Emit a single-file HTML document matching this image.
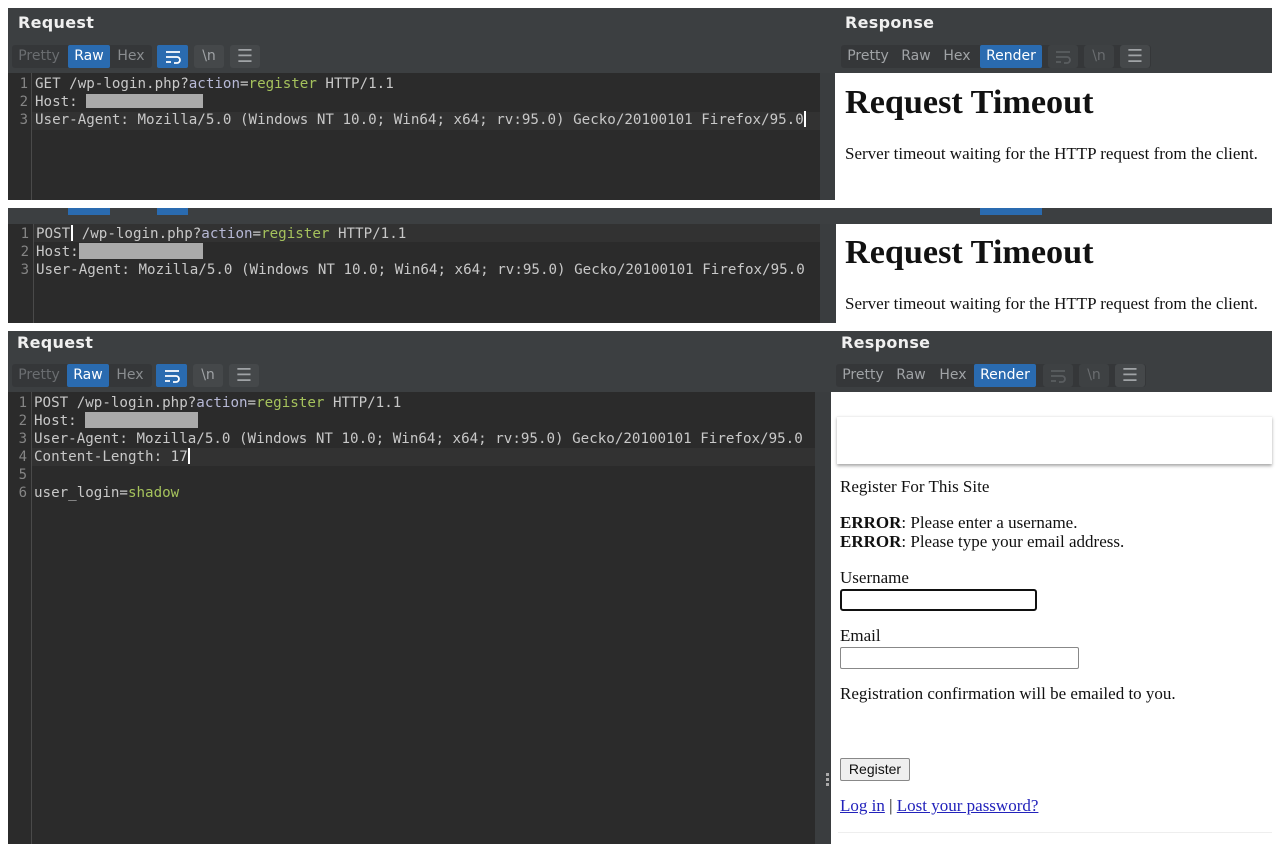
<!DOCTYPE html>
<html><head><meta charset="utf-8"><style>
*{margin:0;padding:0;box-sizing:border-box}
body{width:1280px;height:853px;background:#fff;position:relative;overflow:hidden;font-family:"DejaVu Sans","Liberation Sans",sans-serif}
.a{position:absolute}
.hdr{background:#3c3f41}
.ttl{color:#f0f0f0;font-size:16px;font-weight:bold;letter-spacing:.3px}
.ed{background:#2b2b2b}
.gut{background:#2b2b2b;border-right:1px solid #4a4a4a}
.code{font-family:"DejaVu Sans Mono","Liberation Mono",monospace;font-size:14.2px;color:#c8c8c8;white-space:pre;line-height:18px}
.ln{font-family:"DejaVu Sans Mono",monospace;font-size:14px;color:#858585;line-height:18px;text-align:right;width:20px}
.g{color:#a5c25c}.k{color:#b7b9d6}
.tab{position:absolute;height:23px;font-size:14px;line-height:23px;text-align:center;border-radius:2px;color:#a0a3a6}
.tab svg{position:absolute;left:50%;top:50%;transform:translate(-50%,-50%)}
.grp{background:#353739}
.on{background:#2a6bb0;color:#fff}
.dis{color:#6a6d70}
.btn{background:#45484a;border-radius:3px}
.rd{font-family:"Liberation Serif",serif;color:#111}
.cur{display:inline-block;width:2px;height:16px;background:#fff;vertical-align:-3px}
.hl{background:#323232}
a{color:#2222bb}
</style></head><body>

<!-- PANEL 1 -->
<div class="a hdr" style="left:8px;top:8px;width:1264px;height:65px"></div>
<div class="a ttl" style="left:18px;top:13px">Request</div>
<div class="a ttl" style="left:845px;top:13px">Response</div>
<div class="a grp" style="left:12px;top:45px;width:140px;height:23px;border-radius:3px"></div>
<div class="tab dis" style="left:14px;top:45px;width:50px">Pretty</div>
<div class="tab on" style="left:68px;top:45px;width:42px">Raw</div>
<div class="tab" style="left:112px;top:45px;width:38px;color:#8a8d90">Hex</div>
<div class="tab on" style="left:157px;top:45px;width:31px"><svg width="16" height="14" viewBox="0 0 16 14" fill="none" stroke="#fff" stroke-width="1.8"><path d="M1 2H15M1 7H12a3 3 0 0 1 0 6H9M1 12H6"/></svg></div>
<div class="tab btn" style="left:194px;top:45px;width:30px">\n</div>
<div class="tab btn" style="left:230px;top:45px;width:30px;font-size:18px">☰</div>
<div class="a grp" style="left:841px;top:45px;width:310px;height:23px;border-radius:3px"></div>
<div class="tab" style="left:843px;top:45px;width:50px">Pretty</div>
<div class="tab" style="left:897px;top:45px;width:38px">Raw</div>
<div class="tab" style="left:938px;top:45px;width:38px">Hex</div>
<div class="tab on" style="left:980px;top:45px;width:62px">Render</div>
<div class="tab dis btn" style="left:1048px;top:45px;width:30px;background:#3e4143"><svg width="16" height="14" viewBox="0 0 16 14" fill="none" stroke="#5a5d60" stroke-width="1.8"><path d="M1 2H15M1 7H12a3 3 0 0 1 0 6H9M1 12H6"/></svg></div>
<div class="tab dis btn" style="left:1084px;top:45px;width:30px;background:#3e4143">\n</div>
<div class="tab btn" style="left:1120px;top:45px;width:30px;font-size:18px">☰</div>
<div class="a ed" style="left:8px;top:73px;width:812px;height:127px"></div>
<div class="a hl" style="left:32px;top:112px;width:788px;height:18px"></div>
<div class="a gut" style="left:8px;top:73px;width:24px;height:127px"></div>
<div class="a ln" style="left:8px;top:75px">1<br>2<br>3</div>
<div class="a code" style="left:35px;top:75px">GET /wp-login.php?<span class="k">action</span>=<span class="g">register</span> HTTP/1.1
Host: <span style="display:inline-block;width:117px;height:14px;background:#aaa;vertical-align:-2px"></span>
User-Agent: Mozilla/5.0 (Windows NT 10.0; Win64; x64; rv:95.0) Gecko/20100101 Firefox/95.0<span class="cur"></span></div>
<div class="a" style="left:820px;top:73px;width:15px;height:127px;background:#3a3d3f"></div>
<div class="a rd" style="left:845px;top:84px;font-size:34.2px;font-weight:bold">Request Timeout</div>
<div class="a rd" style="left:845px;top:144px;font-size:17px">Server timeout waiting for the HTTP request from the client.</div>

<!-- PANEL 2 -->
<div class="a hdr" style="left:8px;top:208px;width:1264px;height:16px"></div>
<div class="a" style="left:68px;top:208px;width:42px;height:7px;background:#2a6bb0"></div>
<div class="a" style="left:157px;top:208px;width:31px;height:7px;background:#2a6bb0"></div>
<div class="a" style="left:980px;top:208px;width:62px;height:7px;background:#2a6bb0"></div>
<div class="a ed" style="left:8px;top:224px;width:812px;height:99px"></div>
<div class="a hl" style="left:32px;top:224px;width:788px;height:18px"></div>
<div class="a gut" style="left:8px;top:224px;width:26px;height:99px"></div>
<div class="a ln" style="left:9px;top:225px">1<br>2<br>3</div>
<div class="a code" style="left:36px;top:225px">POST<span class="cur" style="margin-left:1px"></span> /wp-login.php?<span class="k">action</span>=<span class="g">register</span> HTTP/1.1
Host:<span style="display:inline-block;width:124px;height:16px;background:#aaa;vertical-align:-3px"></span>
User-Agent: Mozilla/5.0 (Windows NT 10.0; Win64; x64; rv:95.0) Gecko/20100101 Firefox/95.0</div>
<div class="a" style="left:820px;top:224px;width:16px;height:99px;background:#3a3d3f"></div>
<div class="a rd" style="left:845px;top:234px;font-size:34.2px;font-weight:bold">Request Timeout</div>
<div class="a rd" style="left:845px;top:294px;font-size:17px">Server timeout waiting for the HTTP request from the client.</div>

<!-- PANEL 3 -->
<div class="a hdr" style="left:8px;top:331px;width:1264px;height:61px"></div>
<div class="a ttl" style="left:17px;top:333px">Request</div>
<div class="a ttl" style="left:841px;top:333px">Response</div>
<div class="a grp" style="left:12px;top:364px;width:140px;height:23px;border-radius:3px"></div>
<div class="tab dis" style="left:14px;top:364px;width:50px">Pretty</div>
<div class="tab on" style="left:67px;top:364px;width:42px">Raw</div>
<div class="tab" style="left:111px;top:364px;width:38px;color:#8a8d90">Hex</div>
<div class="tab on" style="left:156px;top:364px;width:31px"><svg width="16" height="14" viewBox="0 0 16 14" fill="none" stroke="#fff" stroke-width="1.8"><path d="M1 2H15M1 7H12a3 3 0 0 1 0 6H9M1 12H6"/></svg></div>
<div class="tab btn" style="left:193px;top:364px;width:30px">\n</div>
<div class="tab btn" style="left:229px;top:364px;width:30px;font-size:18px">☰</div>
<div class="a grp" style="left:836px;top:364px;width:310px;height:23px;border-radius:3px"></div>
<div class="tab" style="left:838px;top:364px;width:50px">Pretty</div>
<div class="tab" style="left:892px;top:364px;width:38px">Raw</div>
<div class="tab" style="left:934px;top:364px;width:38px">Hex</div>
<div class="tab on" style="left:974px;top:364px;width:62px">Render</div>
<div class="tab dis btn" style="left:1043px;top:364px;width:30px;background:#3e4143"><svg width="16" height="14" viewBox="0 0 16 14" fill="none" stroke="#5a5d60" stroke-width="1.8"><path d="M1 2H15M1 7H12a3 3 0 0 1 0 6H9M1 12H6"/></svg></div>
<div class="tab dis btn" style="left:1079px;top:364px;width:30px;background:#3e4143">\n</div>
<div class="tab btn" style="left:1115px;top:364px;width:30px;font-size:18px">☰</div>
<div class="a ed" style="left:8px;top:392px;width:807px;height:452px"></div>
<div class="a hl" style="left:31px;top:448px;width:784px;height:18px"></div>
<div class="a gut" style="left:8px;top:392px;width:24px;height:452px"></div>
<div class="a ln" style="left:7px;top:394px">1<br>2<br>3<br>4<br>5<br>6</div>
<div class="a code" style="left:34px;top:394px">POST /wp-login.php?<span class="k">action</span>=<span class="g">register</span> HTTP/1.1
Host: <span style="display:inline-block;width:113px;height:16px;background:#aaa;vertical-align:-3px"></span>
User-Agent: Mozilla/5.0 (Windows NT 10.0; Win64; x64; rv:95.0) Gecko/20100101 Firefox/95.0
Content-Length: 17<span class="cur"></span>

user_login=<span class="g">shadow</span></div>
<div class="a" style="left:815px;top:392px;width:16px;height:452px;background:#3a3d3f"></div>
<div class="a" style="left:826px;top:773px;width:3px;height:3px;background:#aaa;box-shadow:0 5px 0 #aaa,0 10px 0 #aaa"></div>
<div class="a" style="left:837px;top:416px;width:435px;height:48px;background:#fff;box-shadow:0 2px 3px rgba(0,0,0,.35);border-top:1px solid #f0f0f0"></div>
<div class="a rd" style="left:840px;top:477px;font-size:17px;line-height:19px">Register For This Site</div>
<div class="a rd" style="left:840px;top:513px;font-size:17px;line-height:19px"><b>ERROR</b>: Please enter a username.<br><b>ERROR</b>: Please type your email address.</div>
<div class="a rd" style="left:840px;top:568px;font-size:17px">Username</div>
<div class="a" style="left:840px;top:589px;width:197px;height:22px;border:2px solid #111;border-radius:3px"></div>
<div class="a rd" style="left:840px;top:626px;font-size:17px">Email</div>
<div class="a" style="left:840px;top:647px;width:239px;height:22px;border:1px solid #888;border-radius:2px"></div>
<div class="a rd" style="left:840px;top:684px;font-size:17px">Registration confirmation will be emailed to you.</div>
<div class="a" style="left:840px;top:758px;width:70px;height:23px;border:1px solid #888;border-radius:2px;background:#efefef;font-family:'Liberation Sans',sans-serif;font-size:14px;line-height:21px;text-align:center;color:#111">Register</div>
<div class="a rd" style="left:840px;top:796px;font-size:17px"><a href="#">Log in</a> | <a href="#">Lost your password?</a></div>
<div class="a" style="left:838px;top:832px;width:434px;height:1px;background:#eee"></div>
</body></html>
